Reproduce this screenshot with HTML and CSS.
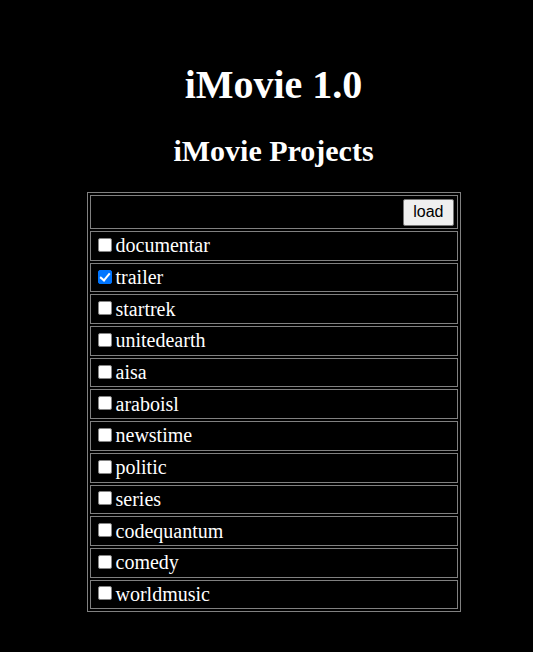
FILE: index.html
```html
<!DOCTYPE html>
<html>
<head>
<meta charset="utf-8">
<title>iMovie 1.0</title>
<link rel="stylesheet" href="styles.css">
</head>
<body>
<main class="page">
  <h1 class="title">iMovie 1.0</h1>
  <h2 class="subtitle">iMovie Projects</h2>
  <table class="projects">
    <tr><td class="toolbar"><button class="load-btn">load</button></td></tr>
    <tr><td class="item"><label><input type="checkbox">documentar</label></td></tr>
    <tr><td class="item"><label><input type="checkbox" checked>trailer</label></td></tr>
    <tr><td class="item"><label><input type="checkbox">startrek</label></td></tr>
    <tr><td class="item"><label><input type="checkbox">unitedearth</label></td></tr>
    <tr><td class="item"><label><input type="checkbox">aisa</label></td></tr>
    <tr><td class="item"><label><input type="checkbox">araboisl</label></td></tr>
    <tr><td class="item"><label><input type="checkbox">newstime</label></td></tr>
    <tr><td class="item"><label><input type="checkbox">politic</label></td></tr>
    <tr><td class="item"><label><input type="checkbox">series</label></td></tr>
    <tr><td class="item"><label><input type="checkbox">codequantum</label></td></tr>
    <tr><td class="item"><label><input type="checkbox">comedy</label></td></tr>
    <tr><td class="item"><label><input type="checkbox">worldmusic</label></td></tr>
  </table>
</main>
</body>
</html>
```
FILE: styles.css
```css
html, body {
  margin: 0;
  background: #000;
}
body {
  color: #fff;
  font-family: "Liberation Serif", "Times New Roman", serif;
  font-size: 20px;
}
.page {
  padding: 63px 0 0 14px;
  display: flex;
  flex-direction: column;
  align-items: center;
}
.title {
  font-size: 40px;
  font-weight: bold;
  margin: 0 0 27px;
  line-height: 44px;
}
.subtitle {
  font-size: 30px;
  font-weight: bold;
  margin: 0 0 25px;
  line-height: 33px;
}
.projects {
  width: 374px;
  border: 1px solid #808080;
  border-spacing: 2px;
}
.projects td {
  border: 1px solid #808080;
  padding: 0 3px;
}
.toolbar {
  text-align: right;
  height: 30px;
  padding: 1px 3px !important;
}
.item {
  height: 27.7px;
}
.item label {
  display: flex;
  align-items: center;
  gap: 4px;
}
.item input {
  appearance: none;
  -webkit-appearance: none;
  box-sizing: border-box;
  width: 14px;
  height: 14px;
  margin: -2px 0 0 4px;
  background: #fff;
  border: 1px solid #858585;
  border-radius: 2px;
  position: relative;
  flex: none;
}
.item input:checked {
  background: #0075ff;
  border-color: #0075ff;
}
.item input:checked::after {
  content: "";
  position: absolute;
  left: 3.5px;
  top: 0px;
  width: 4px;
  height: 8px;
  border: solid #fff;
  border-width: 0 2px 2px 0;
  transform: rotate(40deg);
}
.load-btn {
  font-family: "Liberation Sans", Arial, sans-serif;
  font-size: 16px;
  color: #000;
  background: #efefef;
  border: 1px solid #767676;
  border-radius: 2px;
  padding: 3px 9px;
  height: 27px;
  line-height: 18px;
}
```
